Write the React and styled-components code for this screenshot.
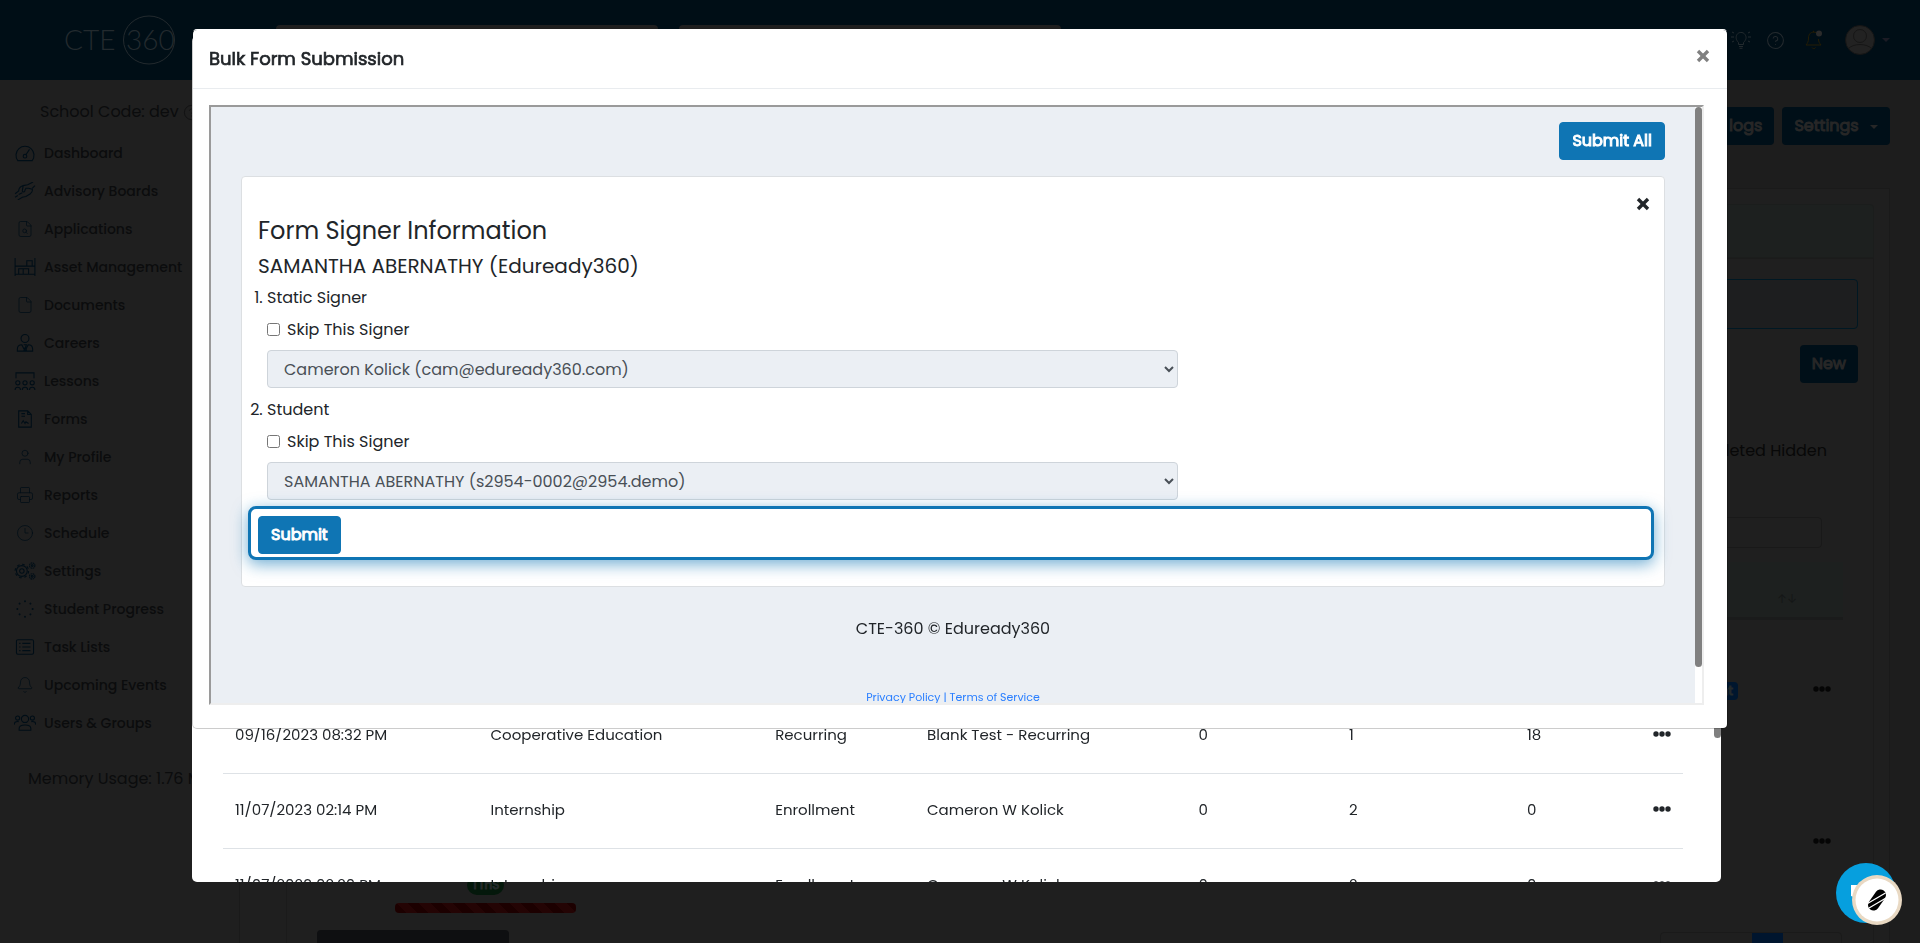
import React, { useState } from 'react';
import styled, { createGlobalStyle, css } from 'styled-components';
import { X, File, FileSearch, User, Printer, Clock3, Bell, CircleHelp } from 'lucide-react';

const GlobalStyle = createGlobalStyle`
  * {
    box-sizing: border-box;
  }

  body {
    margin: 0;
    background: #1d1d1d;
    color: #212529;
    font-family: 'Poppins', 'Inter', 'Liberation Sans', sans-serif;
    font-size: 16px;
    font-weight: 400;
    line-height: 24px;
  }

  button, select, input {
    font: inherit;
  }
`;

// Thickens the regular cut instead of switching to the wider semibold
const heavy = css`
  -webkit-text-stroke: 1px currentColor;
`;

const Page = styled.div`
  height: 100vh;
  overflow: hidden;
  display: flex;
  flex-direction: column;
`;

const TopBar = styled.header`
  flex: none;
  height: 80px;
  padding: 0 30px 0 64px;
  background: #000e16;
  color: #232a2e;
  display: flex;
  align-items: center;
`;

const Logo = styled.svg`
  width: 112px;
  height: 52px;
  margin-right: 100px;
`;

const SearchBox = styled.input`
  width: 382px;
  height: 30px;
  margin-right: 21px;
  border: none;
  border-radius: 4px;
  background: #1f1f1f;
`;

const TopIcons = styled.div`
  margin-left: auto;
  display: flex;
  align-items: center;
`;

const IconButton = styled.button`
  display: flex;
  align-items: center;
  padding: 0;
  margin-left: ${props => props.$gap || 0}px;
  border: none;
  background: none;
  color: ${props => props.$color || 'inherit'};
`;

const Caret = styled.span`
  display: inline-block;
  margin-left: 7px;
  border: 4px solid transparent;
  border-top-color: currentColor;
  border-bottom: none;
  vertical-align: middle;
`;

const Body = styled.div`
  flex: 1;
  min-height: 0;
  display: flex;
`;

const Sidebar = styled.aside`
  flex: none;
  width: 239px;
  padding-top: 20px;
  background: #1f1f1f;
  color: #0b0c0d;
  white-space: nowrap;
  overflow: hidden;
`;

const SchoolCode = styled.div`
  display: flex;
  align-items: center;
  gap: 4px;
  padding-left: 40px;
  margin-bottom: 10px;
`;

const NavLink = styled.a`
  display: flex;
  align-items: center;
  gap: 8px;
  height: 38px;
  padding-left: 14px;
  color: #0b0c0d;
  font-size: 14px;
  font-weight: 500;
  text-decoration: none;

  svg {
    width: 22px;
    height: 18px;
    color: #000e17;
  }
`;

const MemoryUsage = styled.div`
  padding: 25px 0 0 28px;
`;

const Main = styled.main`
  flex: 1;
  min-width: 0;
  padding: 27px 30px 0 0;
`;

const Actions = styled.div`
  display: flex;
  justify-content: flex-end;
  gap: 8px;
  margin-bottom: ${props => props.$space}px;
`;

const DimButton = styled.button`
  height: 38px;
  padding: 0 12px;
  border: none;
  border-radius: 4px;
  background: #000f18;
  color: #272727;
  ${heavy}
`;

const Panel = styled.section`
  border: 1px solid #1a1a1a;
  padding: 15px 15px 0 30px;
  background: #1f1f1f;
`;

const PanelHead = styled.div`
  height: 54px;
  border: 1px solid #1b1d1c;
  border-radius: 4px 4px 0 0;
  background: #1d201f;
`;

const PanelBody = styled.div`
  margin-left: 16px;
  padding: 20px 15px 0 14px;
  border: 1px solid #1b1b1b;
`;

const Notice = styled.div`
  height: 50px;
  margin-bottom: 16px;
  border: 1px solid #001823;
  border-radius: 4px;
  background: #1d1e1f;
`;

const StatusText = styled.div`
  padding: 56px 31px 0 0;
  text-align: right;
  color: #080808;
`;

const FilterInput = styled.input`
  display: block;
  width: 320px;
  height: 31px;
  margin: 54px 36px 14px auto;
  border: 1px solid #191919;
  border-radius: 4px;
  background: transparent;
`;

const BackTable = styled.table`
  width: calc(100% - 15px);
  border-collapse: collapse;
  color: #050505;

  th {
    height: 56px;
    padding: 20px 46px 0 0;
    border-bottom: 3px solid #1a1b1b;
    background: #1d201f;
    color: #141616;
    font-size: 12px;
    font-weight: 400;
    text-align: right;
  }

  td {
    padding: 0;
  }

  td:last-child {
    padding-right: 12px;
    text-align: right;
  }
`;

const BackRow = styled.tr`
  td {
    height: ${props => props.$height}px;
  }

  & + & td {
    border-top: 1px solid #1a1a1a;
  }
`;

const DimBadge = styled.span`
  display: inline-block;
  padding: 0 5px;
  border-radius: ${props => (props.$pill ? 10 : 4)}px;
  background: ${props => props.$color};
  color: #242a2a;
  font-size: ${props => (props.$pill ? 12 : 13)}px;
  line-height: ${props => (props.$pill ? 20 : 18)}px;
  ${heavy}
`;

const Schedule = styled.div`
  display: flex;
  flex-direction: column;
  align-items: center;
  gap: 8px;
  width: 181px;
  margin-top: 104px;
`;

const RedBar = styled.div`
  width: 100%;
  height: 10px;
  border-radius: 4px;
  background: repeating-linear-gradient(45deg, #1c0000 0 8px, #240404 8px 16px);
`;

const BackFooter = styled.div`
  display: flex;
  justify-content: space-between;
  padding: 7px 16px 0 16px;
`;

const ExportButton = styled.button`
  width: 192px;
  height: 38px;
  border: none;
  border-radius: 4px;
  background: #0e0f11;
`;

const Pager = styled.div`
  display: flex;
  width: 182px;
  height: 36px;
  margin-top: 2px;
  padding-left: 91px;
  border: 1px solid #1a1a1a;
  border-radius: 4px;

  &::after {
    content: '';
    width: 31px;
    background: #00152e;
  }
`;

const ListModal = styled.div`
  position: fixed;
  top: 36px;
  bottom: 61px;
  left: 10%;
  right: 199px;
  display: flex;
  flex-direction: column;
  justify-content: flex-end;
  padding: 0 38px 0 31px;
  border-radius: 5px;
  background: #fff;
  overflow: hidden;
`;

const ListThumb = styled.div`
  position: absolute;
  top: 54px;
  right: 0;
  width: 7px;
  height: 648px;
  border-radius: 4px;
  background: #808080;
`;

const ListTable = styled.table`
  flex: none;
  width: 100%;
  margin-bottom: -42px;
  border-collapse: collapse;
  table-layout: fixed;
  font-size: 15px;
  white-space: nowrap;

  td {
    height: 75px;
    padding: 0 12px 2px;
    border-bottom: 1px solid #dee2e6;
  }
`;

const FormModal = styled.div`
  position: fixed;
  top: 29px;
  left: 10%;
  right: 10%;
  border: 1px solid rgba(0, 0, 0, 0.2);
  border-top-color: #fff;
  border-radius: 5px;
  background: #fff;
  background-clip: padding-box;
`;

const ModalHeader = styled.div`
  display: flex;
  align-items: center;
  justify-content: space-between;
  height: 59px;
  padding: 0 14px 0 16px;
  border-bottom: 1px solid #e9ecef;

  h5 {
    margin: 0;
    font-size: 18px;
    font-weight: 400;
    -webkit-text-stroke: 0.7px currentColor;
  }

  button {
    padding-bottom: 6px;
  }
`;

const Frame = styled.div`
  display: flex;
  height: 600px;
  margin: 16px 23px 23px 16px;
  border: 2px solid;
  border-color: #9a9a9a #eee #eee #9a9a9a;
  background: #ebeff4;
`;

const FrameContent = styled.div`
  flex: 1;
  min-width: 0;
  padding: 15px 30px 0;
  overflow: hidden;
`;

const FrameTrack = styled.div`
  flex: none;
  width: 7px;
  background: #fff;
`;

const FrameThumb = styled.div`
  height: 94%;
  border-radius: 4px;
  background: #808080;
`;

const PrimaryButton = styled.button`
  height: 38px;
  padding: 0 12px;
  border: 1px solid #0f75b4;
  border-radius: 4px;
  background: #0f75b4;
  color: #fff;
  ${heavy}
`;

const Card = styled.section`
  position: relative;
  padding: 39px 16px 26px;
  border: 1px solid #dcdfe2;
  border-radius: 4px;
  background: #fff;
`;

const CardClose = styled.button`
  position: absolute;
  top: 17px;
  right: 11px;
  display: flex;
  padding: 0;
  border: none;
  background: none;
  color: #212529;
`;

const Title = styled.h3`
  margin: 0 0 9px;
  font-size: 24px;
  font-weight: 400;
  line-height: 29px;
`;

const Subtitle = styled.h4`
  margin: 0 0 8px;
  font-size: 20px;
  font-weight: 400;
  line-height: 24px;
`;

const Signers = styled.ol`
  display: flex;
  flex-direction: column;
  gap: 10px;
  margin: 0;
  padding-left: 9px;
`;

const SkipLabel = styled.label`
  display: flex;
  align-items: center;
  gap: 7px;
  margin: 8px 0;

  input {
    width: 13px;
    height: 13px;
    margin: 0 0 2px;
  }
`;

const SignerSelect = styled.select`
  display: block;
  width: 66%;
  height: 38px;
  padding: 6px 12px;
  border: 1px solid #ced4da;
  border-radius: 4px;
  background: #ebeff4;
  color: #495057;
`;

const SubmitRow = styled.div`
  position: relative;
  margin: 6px -6px 0 -10px;
  padding: 7px 7px 3px;
  border: 3px solid #0f75b4;
  border-radius: 8px;
  background: #fff;
  box-shadow: 0 4px 16px rgba(15, 117, 180, 0.6);
`;

const FrameFooter = styled.footer`
  padding-top: 30px;
  text-align: center;
`;

const Legal = styled.div`
  margin-top: 47px;
  color: #2a7fff;
  font-size: 11px;
  line-height: 18px;

  a {
    color: inherit;
    text-decoration: none;
  }
`;

const ChatButton = styled.button`
  position: fixed;
  right: 16px;
  bottom: 16px;
  display: flex;
  padding: 0;
  border: none;
  background: none;
`;

const Glyph = ({ children }) => (
  <svg viewBox="0 0 24 20" fill="none" stroke="currentColor" strokeWidth="1.2" aria-hidden="true">
    {children}
  </svg>
);

const Dots = ({ label }) => (
  <svg width="18" height="10" viewBox="0 0 18 10" fill="currentColor" role="img" aria-label={label}>
    <circle cx="3" cy="4" r="2.7" />
    <circle cx="9" cy="4" r="2.7" />
    <circle cx="15" cy="4" r="2.7" />
  </svg>
);

const GaugeIcon = () => (
  <Glyph>
    <path d="M4 18.500a10 10 0 1 1 16 0zM13 12l4-6" />
    <circle cx="12" cy="13.500" r="2" />
  </Glyph>
);

const HandsIcon = () => (
  <Glyph>
    <path d="M1 13l4-3c0-3 2-5 5-6l5-1 6-3M10 4l-1 6c1 2 3 1 3-1l1-2h3l4 1c1 2-1 4-2 5l-5 3-4 1-5 3M23 4l-3 3M5 14l4-2M1 17l3-2" />
  </Glyph>
);

const ShelvesIcon = () => (
  <Glyph>
    <path d="M1 0v20M23 0v20M1 9h22M1 18h22M14 9V3h6v6M5 18v-6h5v6M10 12h6v6" />
  </Glyph>
);

const TieIcon = () => (
  <Glyph>
    <circle cx="12" cy="5" r="4.400" />
    <path d="M3.500 19v-2c0-3 2-5 5-5l3.500 7 3.500-7c3 0 5 2 5 5v2zM10.500 12h3l-1 3 1.500 4M12 15l-1.500 4" />
  </Glyph>
);

const ClassIcon = () => (
  <Glyph>
    <path d="M2 7V1h20v6" />
    {[4, 12, 20].map(x => (
      <g key={x}>
        <circle cx={x} cy="12" r="2.300" />
        <path d={`M${x - 3} 20c0-4 6-4 6 0`} />
      </g>
    ))}
  </Glyph>
);

const SignatureIcon = () => (
  <Glyph>
    <path d="M5 1h10l4 4v14H5zM15 1v4h4M8 4h4M8 7h4M8 15l2-3 2 3 1-2 3 2" />
  </Glyph>
);

const CogsIcon = () => (
  <Glyph>
    <circle cx="8.500" cy="10" r="2.500" />
    <circle cx="8.500" cy="10" r="6" />
    <circle cx="8.500" cy="10" r="7.500" strokeDasharray="3 2.900" />
    <circle cx="20" cy="4" r="1" />
    <circle cx="20" cy="4" r="3" strokeDasharray="1.800 .6" />
    <circle cx="20" cy="16" r="1" />
    <circle cx="20" cy="16" r="3" strokeDasharray="1.800 .6" />
  </Glyph>
);

const SpinnerIcon = () => (
  <Glyph>
    {[0, 45, 90, 135, 180, 225, 270, 315].map(deg => (
      <circle key={deg} cx="12" cy="1.500" r=".5" transform={`rotate(${deg} 12 10)`} />
    ))}
  </Glyph>
);

const ListIcon = () => (
  <Glyph>
    <rect x="2.500" y="2" width="19" height="16" rx="1.500" />
    <path d="M9 6h9M9 10h9M9 14h9M5.500 6h1.500M5.500 10h1.500M5.500 14h1.500" />
  </Glyph>
);

const UsersIcon = () => (
  <Glyph>
    <circle cx="12" cy="5.500" r="4" />
    <circle cx="3.800" cy="4.500" r="2.300" />
    <circle cx="20.200" cy="4.500" r="2.300" />
    <path d="M5.500 18v-2c0-5 13-5 13 0v2zM0 12c0-3 2-4 5-3.500M24 12c0-3-2-4-5-3.500" />
  </Glyph>
);

const NAV_ITEMS = [
  { label: 'Dashboard', icon: <GaugeIcon /> },
  { label: 'Advisory Boards', icon: <HandsIcon /> },
  { label: 'Applications', icon: <FileSearch strokeWidth={1} /> },
  { label: 'Asset Management', icon: <ShelvesIcon /> },
  { label: 'Documents', icon: <File strokeWidth={1} /> },
  { label: 'Careers', icon: <TieIcon /> },
  { label: 'Lessons', icon: <ClassIcon /> },
  { label: 'Forms', icon: <SignatureIcon /> },
  { label: 'My Profile', icon: <User strokeWidth={1} /> },
  { label: 'Reports', icon: <Printer strokeWidth={1} /> },
  { label: 'Schedule', icon: <Clock3 strokeWidth={1} /> },
  { label: 'Settings', icon: <CogsIcon /> },
  { label: 'Student Progress', icon: <SpinnerIcon /> },
  { label: 'Task Lists', icon: <ListIcon /> },
  { label: 'Upcoming Events', icon: <Bell strokeWidth={1} /> },
  { label: 'Users & Groups', icon: <UsersIcon /> },
];

const FORM_ROWS = [
  ['09/16/2023 08:32 PM', 'Cooperative Education', 'Recurring', 'Blank Test - Recurring', 0, 1, 18],
  ['11/07/2023 02:14 PM', 'Internship', 'Enrollment', 'Cameron W Kolick', 0, 2, 0],
  ['11/07/2023 02:20 PM', 'Internship', 'Enrollment', 'Cameron W Kolick', 0, 2, 0],
];

const COLUMN_WIDTHS = ['17.5%', '19.5%', '10.4%', '18.6%', '10.3%', '12.2%', '8.6%', '2.9%'];

const SIGNERS = [
  { role: 'Static Signer', value: 'Cameron Kolick (cam@eduready360.com)' },
  { role: 'Student', value: 'SAMANTHA ABERNATHY (s2954-0002@2954.demo)' },
];

const Header = () => (
  <TopBar>
    <Logo viewBox="0 0 112 52" role="img" aria-label="CTE 360" fill="none" stroke="currentColor">
      <ellipse cx="85" cy="26" rx="25.500" ry="24" />
      <g fill="currentColor" stroke="none" fontFamily="Lato, sans-serif" fontWeight="300">
        <text x="0" y="36" fontSize="28">CTE</text>
        <text x="62" y="36" fontSize="28">360</text>
      </g>
    </Logo>
    <SearchBox aria-label="Search users" />
    <SearchBox aria-label="Search pages" />
    <TopIcons>
      <IconButton aria-label="Tips">
        <svg width="20" height="18" viewBox="0 0 20 18" fill="none" stroke="currentColor">
          <path d="M7.500 11.500C5 9 4.500 6 6 3.500s6-3 8 0 1 5.500-1.500 8v2h-5zM8 15.500h4M8.500 17.300h3M0 6h3M17 6h3M1 1l2 1M17 2l2-1M1 11l2-1M17 10l2 1" />
        </svg>
      </IconButton>
      <IconButton $gap={15} aria-label="Help">
        <CircleHelp size={19} strokeWidth={1.3} />
      </IconButton>
      <IconButton $gap={20} $color="#241d05" aria-label="Notifications">
        <svg width="18" height="20" viewBox="0 0 18 20" fill="none" stroke="currentColor">
          <path d="M11 2.500C6 1 3.500 4 3.500 8c0 4-1 5-2.500 7h15c-1.500-2-2.500-3-2.500-6M7 17.500c.5 1.500 3 1.500 3.500 0M8.500 2V.8" />
          <circle cx="14" cy="3.500" r="3" fill="#2b2b2b" stroke="none" />
        </svg>
      </IconButton>
      <IconButton $gap={22} $color="#1b1b24" aria-label="Account">
        <svg width="30" height="30" viewBox="0 0 30 30" fill="none" stroke="#161616">
          <circle cx="15" cy="15" r="14.500" fill="#222" />
          <circle cx="15" cy="11" r="6.500" />
          <path d="M3 24c5-6 19-6 24 0" />
        </svg>
        <Caret />
      </IconButton>
    </TopIcons>
  </TopBar>
);

const Navigation = () => (
  <Sidebar>
    <SchoolCode>
      School Code: dev <CircleHelp size={17} strokeWidth={1} />
    </SchoolCode>
    <nav>
      {NAV_ITEMS.map(item => (
        <NavLink href="#" key={item.label}>
          {item.icon}
          {item.label}
        </NavLink>
      ))}
    </nav>
    <MemoryUsage>Memory Usage: 1.76 MB</MemoryUsage>
  </Sidebar>
);

const Background = () => (
  <Main>
    <Actions $space={43}>
      <DimButton>View logs</DimButton>
      <DimButton>
        Settings <Caret />
      </DimButton>
    </Actions>
    <Panel>
      <PanelHead />
      <PanelBody>
        <Notice />
        <Actions $space={0}>
          <DimButton>New</DimButton>
        </Actions>
        <StatusText>Completed Hidden</StatusText>
        <FilterInput aria-label="Filter" />
        <BackTable>
          <thead>
            <tr>
              <th colSpan={4}>↑↓</th>
            </tr>
          </thead>
          <tbody>
            <BackRow $height={143}>
              <td width="94" />
              <td />
              <td align="right">
                <DimBadge $color="#00162e">Student</DimBadge>
              </td>
              <td width="105">
                <Dots label="Row actions" />
              </td>
            </BackRow>
            <BackRow $height={162}>
              <td />
              <td>
                <Schedule>
                  <DimBadge $pill $color="#04180b">TThS</DimBadge>
                  <RedBar />
                </Schedule>
              </td>
              <td />
              <td>
                <Dots label="Row actions" />
              </td>
            </BackRow>
          </tbody>
        </BackTable>
        <BackFooter>
          <ExportButton aria-label="Export" />
          <Pager />
        </BackFooter>
      </PanelBody>
    </Panel>
  </Main>
);

const FormList = () => (
  <ListModal>
    <ListTable>
      <colgroup>
        {COLUMN_WIDTHS.map((width, i) => (
          <col key={i} width={width} />
        ))}
      </colgroup>
      <tbody>
        {FORM_ROWS.map(row => (
          <tr key={row[0]}>
            {row.map((cell, i) => (
              <td key={i}>{cell}</td>
            ))}
            <td>
              <Dots label="Form actions" />
            </td>
          </tr>
        ))}
      </tbody>
    </ListTable>
    <ListThumb />
  </ListModal>
);

const Signer = ({ role, value }) => {
  const [skipped, setSkipped] = useState(false);

  return (
    <li>
      {role}
      <SkipLabel>
        <input type="checkbox" checked={skipped} onChange={e => setSkipped(e.target.checked)} />
        Skip This Signer
      </SkipLabel>
      <SignerSelect aria-label={role} defaultValue={value}>
        <option>{value}</option>
      </SignerSelect>
    </li>
  );
};

const SubmissionModal = () => (
  <FormModal role="dialog" aria-label="Bulk Form Submission">
    <ModalHeader>
      <h5>Bulk Form Submission</h5>
      <IconButton $color="#808080" aria-label="Close">
        <X size={20} strokeWidth={4} strokeLinecap="butt" />
      </IconButton>
    </ModalHeader>
    <Frame>
      <FrameContent>
        <Actions $space={16}>
          <PrimaryButton>Submit All</PrimaryButton>
        </Actions>
        <Card>
          <CardClose aria-label="Remove form">
            <X size={20} strokeWidth={4} strokeLinecap="butt" />
          </CardClose>
          <Title>Form Signer Information</Title>
          <Subtitle>SAMANTHA ABERNATHY (Eduready360)</Subtitle>
          <Signers>
            {SIGNERS.map(signer => (
              <Signer key={signer.role} {...signer} />
            ))}
          </Signers>
          <SubmitRow>
            <PrimaryButton>Submit</PrimaryButton>
          </SubmitRow>
        </Card>
        <FrameFooter>
          CTE-360 © Eduready360
          <Legal>
            <a href="#">Privacy Policy</a> | <a href="#">Terms of Service</a>
          </Legal>
        </FrameFooter>
      </FrameContent>
      <FrameTrack>
        <FrameThumb />
      </FrameTrack>
    </Frame>
  </FormModal>
);

const ChatLauncher = () => (
  <ChatButton aria-label="Open chat">
    <svg width="68" height="64" viewBox="0 0 68 64">
      <circle cx="30" cy="30" r="30" fill="#069fde" />
      <path d="M15 22h8v14l-8-3z" fill="#fff" />
      <circle cx="41" cy="37" r="25" fill="#e9d9c3" />
      <circle cx="41" cy="37" r="21.500" fill="#fff" />
      <path d="M44.500 32 37.500 42" stroke="#000" strokeWidth="11" strokeLinecap="round" />
      <path d="M31.500 40.500 49.500 30M33 45l17-10" stroke="#fff" strokeWidth="1.300" />
    </svg>
  </ChatButton>
);

const App = () => (
  <>
    <GlobalStyle />
    <Page>
      <Header />
      <Body>
        <Navigation />
        <Background />
      </Body>
    </Page>
    <FormList />
    <SubmissionModal />
    <ChatLauncher />
  </>
);

export default App;
